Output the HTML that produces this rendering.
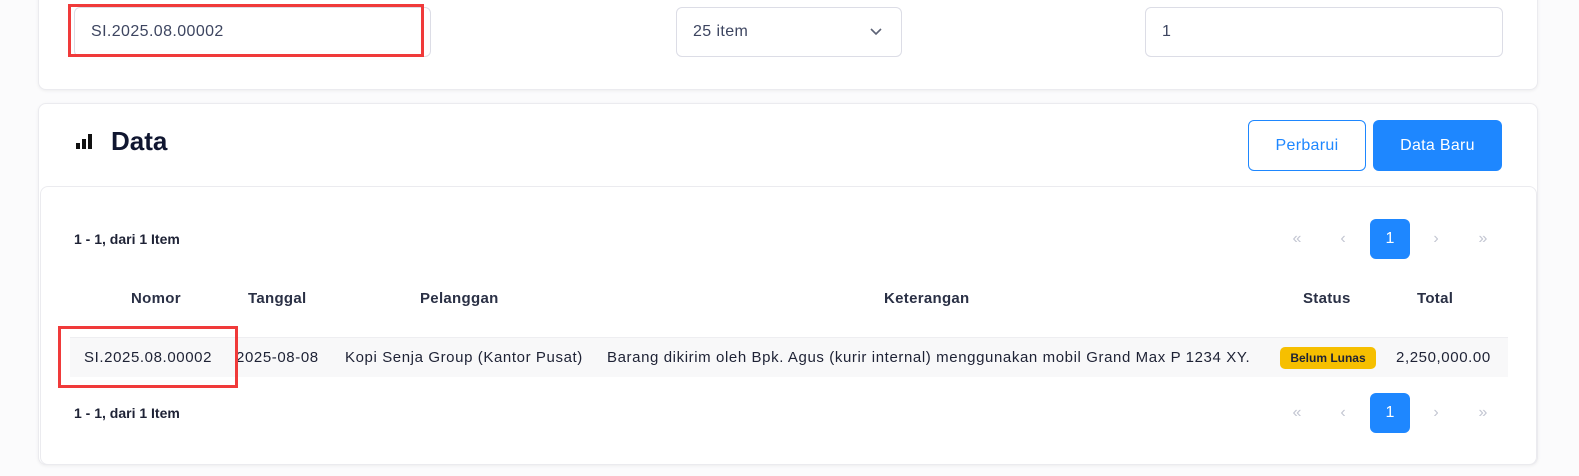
<!DOCTYPE html>
<html><head><style>
*{box-sizing:border-box;margin:0;padding:0}
body{width:1579px;height:476px;background:#fbfbfc;font-family:"Liberation Sans",sans-serif;position:relative;overflow:hidden;color:#1e2235}
.a{position:absolute}
.card{position:absolute;background:#fff;border:1px solid #ebebef;border-radius:8px;box-shadow:0 1px 3px rgba(0,0,0,.06)}
.inp{position:absolute;border:1px solid #dcdde6;border-radius:6px;background:#fff;font-size:16px;color:#3d4560;padding-left:16px;display:flex;align-items:center;letter-spacing:.4px}
.pg{position:absolute;width:40px;height:40px;display:flex;align-items:center;justify-content:center;color:#c3c6d2;font-size:16px}
.th{position:absolute;top:290px;font-weight:bold;font-size:15px;color:#2a3045;white-space:nowrap;letter-spacing:.3px}
.td{position:absolute;top:349px;font-size:15px;color:#1e2235;white-space:nowrap;letter-spacing:.6px}
</style></head><body>
<div class="card" style="left:38px;top:-10px;width:1500px;height:100px"></div>
<div class="inp" style="left:74px;top:7px;width:357px;height:50px;padding-left:16px">SI.2025.08.00002</div>
<div class="a" style="left:68px;top:4px;width:356px;height:53px;border:3px solid #f03a3a"></div>
<div class="inp" style="left:676px;top:7px;width:226px;height:50px">25 item
<svg class="a" style="left:192px;top:19px" width="14" height="10" viewBox="0 0 14 10"><path d="M2 2l5 5 5-5" fill="none" stroke="#5c6275" stroke-width="1.6"/></svg></div>
<div class="inp" style="left:1145px;top:7px;width:358px;height:50px">1</div>

<div class="card" style="left:38px;top:103px;width:1500px;height:362px"></div>
<svg class="a" style="left:76px;top:133px" width="18" height="16"><rect x="0" y="10" width="4" height="6" fill="#111"/><rect x="6" y="6" width="4" height="10" fill="#111"/><rect x="12" y="1" width="4" height="15" fill="#111"/></svg>
<div class="a" style="left:111px;top:126px;font-size:26px;font-weight:bold;color:#101630">Data</div>
<div class="a" style="left:1248px;top:120px;width:118px;height:51px;border:1px solid #1e87ff;border-radius:6px;color:#1e87ff;font-size:16px;display:flex;align-items:center;justify-content:center;letter-spacing:.3px">Perbarui</div>
<div class="a" style="left:1373px;top:120px;width:129px;height:51px;background:#1e87ff;border-radius:6px;color:#fff;font-size:16px;display:flex;align-items:center;justify-content:center;letter-spacing:.3px">Data Baru</div>
<div class="card" style="left:40px;top:186px;width:1497px;height:279px;border-radius:8px;box-shadow:none"></div>

<div class="a" style="left:74px;top:231px;font-size:14px;font-weight:bold;color:#1e2235">1 - 1, dari 1 Item</div>
<div class="pg" style="left:1277px;top:219px">«</div><div class="pg" style="left:1323px;top:219px">‹</div>
<div class="pg" style="left:1370px;top:219px;background:#1e87ff;color:#fff;border-radius:6px">1</div>
<div class="pg" style="left:1416px;top:219px">›</div><div class="pg" style="left:1463px;top:219px">»</div>

<div class="th" style="left:131px">Nomor</div>
<div class="th" style="left:248px">Tanggal</div>
<div class="th" style="left:420px">Pelanggan</div>
<div class="th" style="left:884px">Keterangan</div>
<div class="th" style="left:1303px">Status</div>
<div class="th" style="left:1417px">Total</div>

<div class="a" style="left:70px;top:337px;width:1438px;height:40px;background:#f8f8f9;border-top:1px solid #eeeef1"></div>
<div class="td" style="left:84px">SI.2025.08.00002</div>
<div class="td" style="left:236px">2025-08-08</div>
<div class="td" style="left:345px">Kopi Senja Group (Kantor Pusat)</div>
<div class="td" style="left:607px">Barang dikirim oleh Bpk. Agus (kurir internal) menggunakan mobil Grand Max P 1234 XY.</div>
<div class="a" style="left:1280px;top:347px;width:96px;height:22px;background:#f6bf00;border-radius:5px;font-size:12px;font-weight:bold;color:#1e2235;display:flex;align-items:center;justify-content:center">Belum Lunas</div>
<div class="td" style="left:1396px">2,250,000.00</div>
<div class="a" style="left:58px;top:326px;width:180px;height:62px;border:3px solid #f03a3a"></div>

<div class="a" style="left:74px;top:405px;font-size:14px;font-weight:bold;color:#1e2235">1 - 1, dari 1 Item</div>
<div class="pg" style="left:1277px;top:393px">«</div><div class="pg" style="left:1323px;top:393px">‹</div>
<div class="pg" style="left:1370px;top:393px;background:#1e87ff;color:#fff;border-radius:6px">1</div>
<div class="pg" style="left:1416px;top:393px">›</div><div class="pg" style="left:1463px;top:393px">»</div>
</body></html>
